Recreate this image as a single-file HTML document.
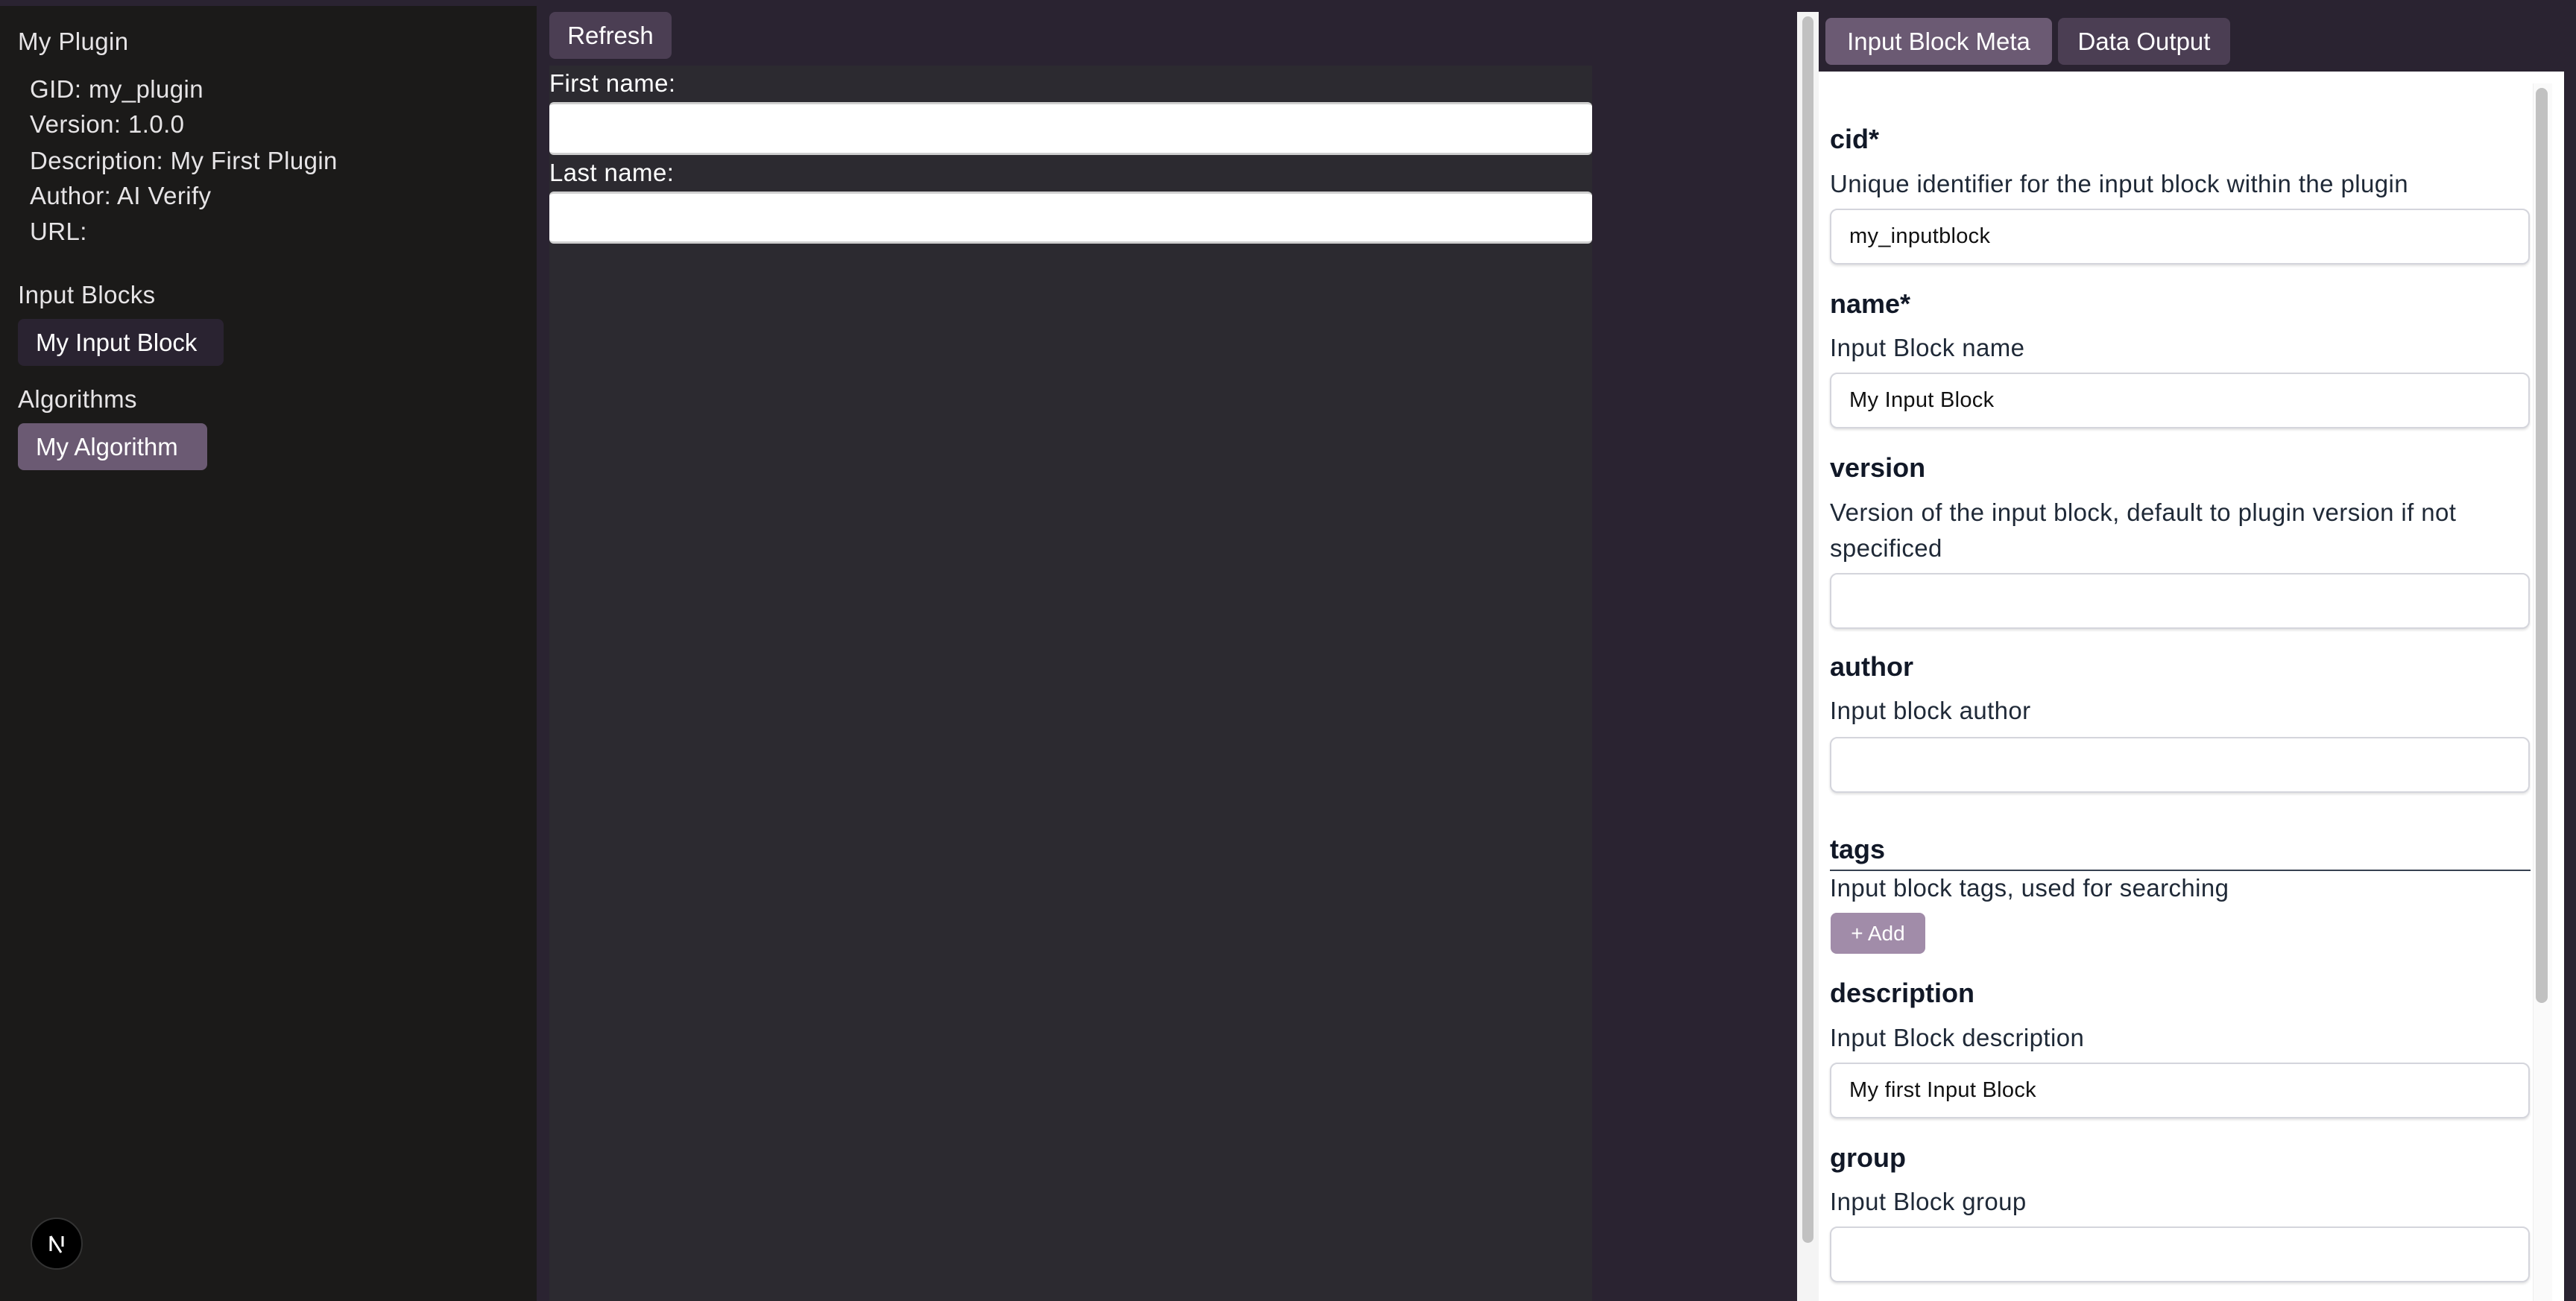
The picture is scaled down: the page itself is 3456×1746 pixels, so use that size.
<!DOCTYPE html>
<html><head><meta charset="utf-8"><style>
*{box-sizing:border-box;margin:0;padding:0}
body{width:3456px;height:1746px;background:#2a2331;position:relative;overflow:hidden;font-family:"Liberation Sans",sans-serif;}
.a{position:absolute;white-space:nowrap}
.side{left:0;top:8px;width:720px;height:1738px;background:#1b1a19}
.lt{color:#e6e4e6;font-size:33px;letter-spacing:0.4px;line-height:48px}
.btn{border-radius:8px;color:#fff;font-size:33px;letter-spacing:0;display:flex;align-items:center;justify-content:center}
.mid{left:737px;top:88px;width:1399px;height:1658px;background:#2c2a30}
.inp{background:#fff;border-radius:6px;border-top:3px solid #cfcfcf;border-bottom:3px solid #cfcfcf}
.h{color:#111827;font-weight:bold;font-size:36px;letter-spacing:0}
.d{color:#1f2937;font-size:33px;letter-spacing:0.4px;line-height:48px}
.fi{left:2455px;width:939px;height:75px;border:2px solid #d4d5dc;border-radius:10px;background:#fff;box-shadow:0 2px 3px rgba(0,0,0,.12);font-size:29px;color:#111;padding-left:24px;display:flex;align-items:center;letter-spacing:0.3px}
</style></head><body>
<div class="a side"></div>
<div class="a lt" style="left:24px;top:32px">My Plugin</div>
<div class="a lt" style="left:40px;top:96px">GID: my_plugin</div>
<div class="a lt" style="left:40px;top:143px">Version: 1.0.0</div>
<div class="a lt" style="left:40px;top:192px">Description: My First Plugin</div>
<div class="a lt" style="left:40px;top:239px">Author: AI Verify</div>
<div class="a lt" style="left:40px;top:287px">URL:</div>
<div class="a lt" style="left:24px;top:372px">Input Blocks</div>
<div class="a btn" style="left:24px;top:428px;width:276px;height:63px;background:#2a2331;justify-content:flex-start;padding-left:24px">My Input Block</div>
<div class="a lt" style="left:24px;top:512px">Algorithms</div>
<div class="a btn" style="left:24px;top:568px;width:254px;height:63px;background:#6b5a73;justify-content:flex-start;padding-left:24px">My Algorithm</div>
<div class="a" style="left:41px;top:1634px;width:70px;height:70px;border-radius:50%;background:#000;border:2px solid #333"></div>
<svg class="a" style="left:56px;top:1649px" width="40" height="40" viewBox="0 0 40 40"><path d="M12 10V30M12 10L26 32M28 10V24" stroke="#fff" stroke-width="3" fill="none"/></svg>

<div class="a btn" style="left:737px;top:16px;width:164px;height:63px;background:#4b3e53">Refresh</div>
<div class="a mid"></div>
<div class="a lt" style="left:737px;top:88px;color:#fff">First name:</div>
<div class="a inp" style="left:737px;top:137px;width:1399px;height:71px"></div>
<div class="a lt" style="left:737px;top:208px;color:#fff">Last name:</div>
<div class="a inp" style="left:737px;top:257px;width:1399px;height:70px"></div>

<div class="a" style="left:2411px;top:16px;width:29px;height:1730px;background:#f4f4f4"></div>
<div class="a" style="left:2418px;top:22px;width:15px;height:1646px;background:#c1c1c1;border-radius:8px"></div>
<div class="a btn" style="left:2449px;top:24px;width:304px;height:63px;background:#6b5a73">Input Block Meta</div>
<div class="a btn" style="left:2761px;top:24px;width:231px;height:63px;background:#4b3e53">Data Output</div>
<div class="a" style="left:2440px;top:96px;width:1000px;height:1650px;background:#fff"></div>
<div class="a" style="left:3398px;top:112px;width:26px;height:1634px;background:#fafafa;border-left:1px solid #eee"></div>
<div class="a" style="left:3402px;top:118px;width:16px;height:1228px;background:#c1c1c1;border-radius:8px"></div>

<div class="a h" style="left:2455px;top:166px">cid*</div>
<div class="a d" style="left:2455px;top:223px">Unique identifier for the input block within the plugin</div>
<div class="a fi" style="top:280px">my_inputblock</div>
<div class="a h" style="left:2455px;top:387px">name*</div>
<div class="a d" style="left:2455px;top:443px">Input Block name</div>
<div class="a fi" style="top:500px">My Input Block</div>
<div class="a h" style="left:2455px;top:607px">version</div>
<div class="a d" style="left:2455px;top:664px">Version of the input block, default to plugin version if not</div>
<div class="a d" style="left:2455px;top:712px">specificed</div>
<div class="a fi" style="top:769px"></div>
<div class="a h" style="left:2455px;top:874px">author</div>
<div class="a d" style="left:2455px;top:930px">Input block author</div>
<div class="a fi" style="top:989px"></div>
<div class="a h" style="left:2455px;top:1119px">tags</div>
<div class="a" style="left:2455px;top:1167px;width:940px;height:2px;background:#374151"></div>
<div class="a d" style="left:2455px;top:1168px">Input block tags, used for searching</div>
<div class="a btn" style="left:2456px;top:1225px;width:127px;height:55px;background:#a18ca9;font-size:28px">+ Add</div>
<div class="a h" style="left:2455px;top:1312px">description</div>
<div class="a d" style="left:2455px;top:1369px">Input Block description</div>
<div class="a fi" style="top:1426px">My first Input Block</div>
<div class="a h" style="left:2455px;top:1533px">group</div>
<div class="a d" style="left:2455px;top:1589px">Input Block group</div>
<div class="a fi" style="top:1646px"></div>
</body></html>
